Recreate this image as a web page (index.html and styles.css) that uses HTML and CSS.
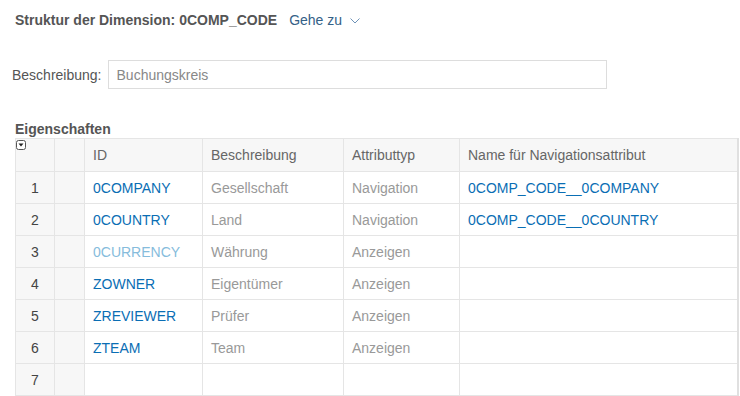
FILE: index.html
```html
<!DOCTYPE html>
<html lang="de">
<head>
    <meta charset="UTF-8">
    <title>Struktur der Dimension</title>
    <link rel="stylesheet" href="styles.css">
</head>
<body>

    <!-- Kopfzeile -->
    <div class="page-header">
        <h1>Struktur der Dimension: 0COMP_CODE</h1>
        <a class="goto" href="#">Gehe zu
            <svg class="chevron" width="10" height="6" viewBox="0 0 10 6">
                <path d="M0.5 0.5 L5 5 L9.5 0.5" fill="none" stroke="#6f93b8" stroke-width="1"/>
            </svg>
        </a>
    </div>

    <!-- Beschreibung -->
    <div class="form-row">
        <label for="desc">Beschreibung:</label>
        <input type="text" id="desc" class="form-control" value="Buchungskreis">
    </div>

    <!-- Eigenschaften -->
    <h2>Eigenschaften</h2>
    <table class="table">
        <colgroup>
            <col style="width:39px">
            <col style="width:30px">
            <col style="width:118px">
            <col style="width:141px">
            <col style="width:116px">
            <col>
        </colgroup>
        <thead>
            <tr>
                <th class="num">
                    <span class="menu-icon">
                        <svg width="10" height="10" viewBox="0 0 10 10">
                            <rect x="0.5" y="0.5" width="9" height="9" rx="2" fill="#fff" stroke="#555"/>
                            <path d="M2.5 3.5 L7.5 3.5 L5 6.5 Z" fill="#222"/>
                        </svg>
                    </span>
                </th>
                <th class="sel"></th>
                <th>ID</th>
                <th>Beschreibung</th>
                <th>Attributtyp</th>
                <th>Name für Navigationsattribut</th>
            </tr>
        </thead>
        <tbody id="attrList"></tbody>
    </table>

    <script>
        const attributes = [
            { id: '0COMPANY', desc: 'Gesellschaft', type: 'Navigation', nav: '0COMP_CODE__0COMPANY' },
            { id: '0COUNTRY', desc: 'Land', type: 'Navigation', nav: '0COMP_CODE__0COUNTRY' },
            { id: '0CURRENCY', desc: 'Währung', type: 'Anzeigen', nav: '', faded: true },
            { id: 'ZOWNER', desc: 'Eigentümer', type: 'Anzeigen', nav: '' },
            { id: 'ZREVIEWER', desc: 'Prüfer', type: 'Anzeigen', nav: '' },
            { id: 'ZTEAM', desc: 'Team', type: 'Anzeigen', nav: '' },
            { id: '', desc: '', type: '', nav: '' }
        ];

        const list = document.getElementById('attrList');
        attributes.forEach((a, i) => {
            list.innerHTML += `
                <tr>
                    <td class="num">${i + 1}</td>
                    <td class="sel"></td>
                    <td class="link ${a.faded ? 'faded' : ''}">${a.id}</td>
                    <td class="muted">${a.desc}</td>
                    <td class="muted">${a.type}</td>
                    <td class="link">${a.nav}</td>
                </tr>
            `;
        });
    </script>
</body>
</html>
```

FILE: styles.css
```css
* {
    margin: 0;
    padding: 0;
    box-sizing: border-box;
}

body {
    font-family: "Liberation Sans", Arial, sans-serif;
    font-size: 14px;
    color: #333;
    background-color: #fff;
    padding: 0 0 0 15px;
}

.page-header {
    display: flex;
    align-items: center;
    height: 40px;
}

h1 {
    font-size: 14px;
    font-weight: bold;
    color: #555;
}

.goto {
    display: flex;
    align-items: center;
    margin-left: 12px;
    color: #346187;
    text-decoration: none;
    font-size: 14px;
}

.chevron {
    margin-left: 8px;
    margin-top: 1px;
}

.form-row {
    display: flex;
    align-items: center;
    margin-top: 20px;
    margin-left: -3px;
}

.form-row label {
    font-size: 14px;
    color: #555;
    margin-right: 6px;
}

.form-control {
    width: 499px;
    height: 29px;
    padding: 0 8px;
    border: 1px solid #ddd;
    font-family: "Liberation Sans", Arial, sans-serif;
    font-size: 14px;
    color: #888;
}

h2 {
    font-size: 14px;
    font-weight: bold;
    color: #555;
    margin-top: 32px;
    line-height: 16px;
}

.table {
    width: 724px;
    border-collapse: collapse;
    table-layout: fixed;
    margin-top: 1px;
}

.table th, .table td {
    border: 1px solid #e5e5e5;
    padding: 0 8px;
    text-align: left;
    white-space: nowrap;
    overflow: hidden;
}

.table th {
    height: 33px;
    font-weight: normal;
    color: #666;
    background-color: #f7f7f7;
}

.table td {
    height: 32px;
}

.table td:nth-child(n+3), .table th:nth-child(n+3) {
    border-left-color: #d2d2d2;
}

.table th:last-child, .table td:last-child {
    border-right: 2px solid #e0e0e0;
}

.table .num {
    text-align: center;
    background-color: #f7f7f7;
    color: #444;
    position: relative;
}

.table .sel {
    background-color: #f7f7f7;
}

.menu-icon {
    position: absolute;
    left: 0;
    top: 1px;
    line-height: 0;
}

.link {
    color: #0a6eb4;
}

.link.faded {
    color: #86bcdc;
}

.muted {
    color: #999;
}
```
